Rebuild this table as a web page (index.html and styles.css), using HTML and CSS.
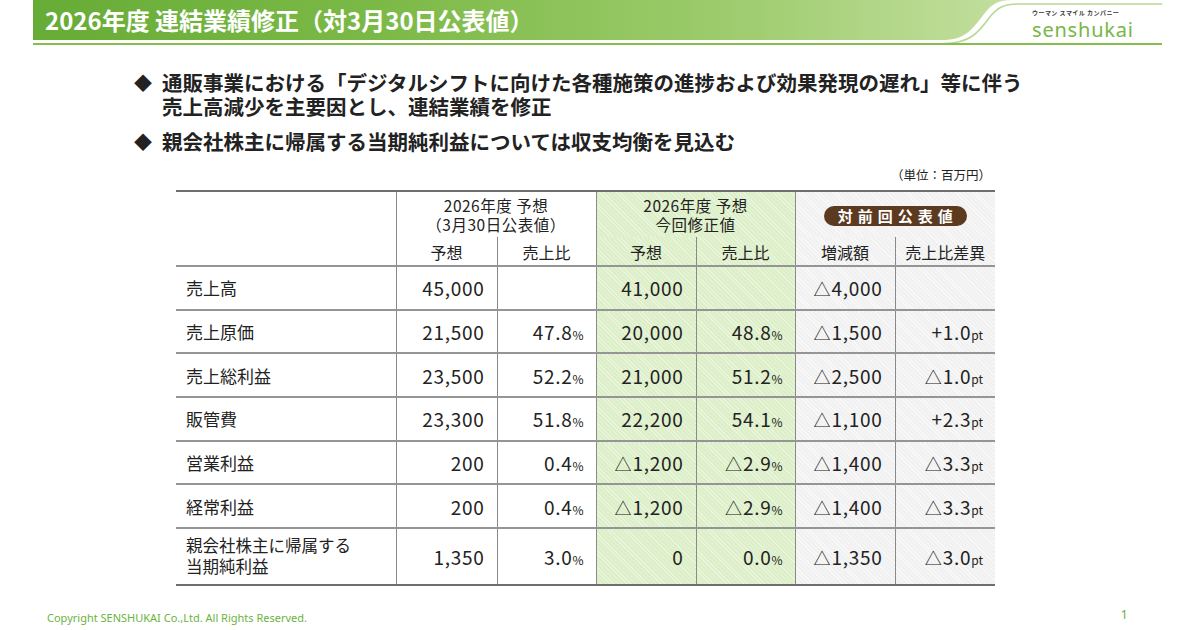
FILE: index.html
```html
<!DOCTYPE html>
<html lang="ja">
<head>
<meta charset="utf-8">
<title>2026年度 連結業績修正</title>
<link rel="stylesheet" href="styles.css">
</head>
<body>
<div class="slide">
  <header class="header">
    <svg class="header-bg" width="1200" height="47" viewBox="0 0 1200 47" aria-hidden="true">
      <defs>
        <linearGradient id="gbar" x1="33" y1="0" x2="1010" y2="0" gradientUnits="userSpaceOnUse">
          <stop offset="0" stop-color="#67ac37"/>
          <stop offset="0.35" stop-color="#7bb946"/>
          <stop offset="0.7" stop-color="#9ccb6b"/>
          <stop offset="1" stop-color="#c3df9f"/>
        </linearGradient>
      </defs>
      <path d="M33,0 H1012 C998,0 992,4 984,14 C972,30 965,40 942,40 H33 Z" fill="url(#gbar)"/>
      <path d="M944,43.5 C970,43.5 979,32 989,18 C997,8 1003,4 1018,4 H1162" fill="none" stroke="#b9d894" stroke-width="1.6"/>
      <path d="M33,44 H1162" fill="none" stroke="#86be4e" stroke-width="2"/>
    </svg>
    <div class="header-row">
      <h1 class="title">2026年度 連結業績修正（対3月30日公表値）</h1>
      <div class="logo">
        <span class="logo-tag">ウーマン スマイル カンパニー</span>
        <span class="logo-name">senshukai</span>
      </div>
    </div>
  </header>

  <ul class="points">
    <li><span class="mark">◆</span><span class="ptext">通販事業における「デジタルシフトに向けた各種施策の進捗および効果発現の遅れ」等に伴う<br>売上高減少を主要因とし、連結業績を修正</span></li>
    <li><span class="mark">◆</span><span class="ptext">親会社株主に帰属する当期純利益については収支均衡を見込む</span></li>
  </ul>

  <div class="tablewrap">
    <p class="unit">（単位：百万円）</p>
    <table class="fin">
      <colgroup>
        <col class="c-label"><col class="c1"><col class="c2"><col class="c3"><col class="c4"><col class="c5"><col class="c6">
      </colgroup>
      <thead>
        <tr class="h1row">
          <th rowspan="2" class="lab"></th>
          <th colspan="2" class="grp"><span class="hl">2026年度 予想</span><span class="hl">（3月30日公表値）</span></th>
          <th colspan="2" class="grp g"><span class="hl">2026年度 予想</span><span class="hl">今回修正値</span></th>
          <th colspan="2" class="grp s"><span class="badge">対前回公表値</span></th>
        </tr>
        <tr class="h2row">
          <th class="sub">予想</th>
          <th class="sub">売上比</th>
          <th class="sub g">予想</th>
          <th class="sub g">売上比</th>
          <th class="sub s">増減額</th>
          <th class="sub s">売上比差異</th>
        </tr>
      </thead>
      <tbody>
        <tr>
          <td class="lab">売上高</td>
          <td class="num">45,000</td>
          <td class="num"></td>
          <td class="num g">41,000</td>
          <td class="num g"></td>
          <td class="num s"><span class="tri">△</span>4,000</td>
          <td class="num s"></td>
        </tr>
        <tr>
          <td class="lab">売上原価</td>
          <td class="num">21,500</td>
          <td class="num">47.8<span class="u">%</span></td>
          <td class="num g">20,000</td>
          <td class="num g">48.8<span class="u">%</span></td>
          <td class="num s"><span class="tri">△</span>1,500</td>
          <td class="num s">+1.0<span class="u">pt</span></td>
        </tr>
        <tr>
          <td class="lab">売上総利益</td>
          <td class="num">23,500</td>
          <td class="num">52.2<span class="u">%</span></td>
          <td class="num g">21,000</td>
          <td class="num g">51.2<span class="u">%</span></td>
          <td class="num s"><span class="tri">△</span>2,500</td>
          <td class="num s"><span class="tri">△</span>1.0<span class="u">pt</span></td>
        </tr>
        <tr>
          <td class="lab">販管費</td>
          <td class="num">23,300</td>
          <td class="num">51.8<span class="u">%</span></td>
          <td class="num g">22,200</td>
          <td class="num g">54.1<span class="u">%</span></td>
          <td class="num s"><span class="tri">△</span>1,100</td>
          <td class="num s">+2.3<span class="u">pt</span></td>
        </tr>
        <tr>
          <td class="lab">営業利益</td>
          <td class="num">200</td>
          <td class="num">0.4<span class="u">%</span></td>
          <td class="num g"><span class="tri">△</span>1,200</td>
          <td class="num g"><span class="tri">△</span>2.9<span class="u">%</span></td>
          <td class="num s"><span class="tri">△</span>1,400</td>
          <td class="num s"><span class="tri">△</span>3.3<span class="u">pt</span></td>
        </tr>
        <tr>
          <td class="lab">経常利益</td>
          <td class="num">200</td>
          <td class="num">0.4<span class="u">%</span></td>
          <td class="num g"><span class="tri">△</span>1,200</td>
          <td class="num g"><span class="tri">△</span>2.9<span class="u">%</span></td>
          <td class="num s"><span class="tri">△</span>1,400</td>
          <td class="num s"><span class="tri">△</span>3.3<span class="u">pt</span></td>
        </tr>
        <tr class="last">
          <td class="lab two"><span class="hl2">親会社株主に帰属する</span><span class="hl2">当期純利益</span></td>
          <td class="num">1,350</td>
          <td class="num">3.0<span class="u">%</span></td>
          <td class="num g">0</td>
          <td class="num g">0.0<span class="u">%</span></td>
          <td class="num s"><span class="tri">△</span>1,350</td>
          <td class="num s"><span class="tri">△</span>3.0<span class="u">pt</span></td>
        </tr>
      </tbody>
    </table>
  </div>

  <footer class="footer">
    <span class="copy">Copyright SENSHUKAI Co.,Ltd. All Rights Reserved.</span>
    <span class="page">1</span>
  </footer>
</div>
</body>
</html>
```

FILE: styles.css
```css
* { box-sizing: border-box; }

html, body {
  margin: 0;
  padding: 0;
  background: #ffffff;
}

body {
  width: 1200px;
  height: 630px;
  overflow: hidden;
  font-family: "Noto Sans CJK JP", "Noto Sans", sans-serif;
  color: #222222;
}

.slide {
  width: 1200px;
  height: 630px;
}

/* ---------- header ---------- */
.header {
  display: grid;
  height: 47px;
}

.header > * {
  grid-area: 1 / 1;
}

.header-bg {
  display: block;
}

.header-row {
  display: flex;
  align-items: flex-start;
}

.title {
  margin: 0;
  padding-left: 45px;
  height: 40px;
  line-height: 40px;
  font-size: 24px;
  font-weight: 700;
  color: #ffffff;
}

.logo {
  margin-left: auto;
  margin-right: 67px;
  padding-top: 8px;
  display: flex;
  flex-direction: column;
  width: 101px;
}

.logo-tag {
  font-size: 6px;
  line-height: 9px;
  height: 9px;
  font-weight: 700;
  color: #3a3a3a;
  letter-spacing: 0.45px;
  white-space: nowrap;
}

.logo-name {
  font-family: "Noto Sans", "Open Sans", sans-serif;
  font-size: 20px;
  line-height: 25px;
  color: #78b646;
  letter-spacing: 0.8px;
}

/* ---------- bullets ---------- */
.points {
  list-style: none;
  margin: 23px 0 0 0;
  padding: 0 0 0 134px;
}

.points li {
  display: flex;
  align-items: flex-start;
  font-size: 20.5px;
  line-height: 24px;
  font-weight: 700;
  color: #222222;
}

.points li + li {
  margin-top: 11px;
}

.mark {
  width: 28px;
  flex: none;
  font-size: 18px;
}

/* ---------- table ---------- */
.tablewrap {
  margin: 14px 0 0 176px;
  width: 819px;
}

.unit {
  margin: 0 0 7px 0;
  text-align: right;
  font-size: 12.5px;
  line-height: 16px;
  padding-right: 4px;
  color: #222222;
}

.fin {
  width: 819px;
  border-collapse: collapse;
  table-layout: fixed;
  border-top: 2px solid #6e6e6e;
  border-bottom: 2px solid #6e6e6e;
}

.c-label { width: 220px; }
.c1 { width: 101px; }
.c2 { width: 99px; }
.c3 { width: 100px; }
.c4 { width: 99px; }
.c5 { width: 100px; }
.c6 { width: 100px; }

.fin th, .fin td {
  padding: 0;
  font-weight: 400;
  border-left: 1.5px solid #8a8a8a;
}

.fin .lab {
  border-left: none;
  text-align: left;
  padding-left: 10px;
  font-size: 17px;
  line-height: 21px;
}

.h1row { height: 46px; }
.h2row { height: 29px; }

.grp {
  font-size: 15.5px;
  text-align: center;
  vertical-align: middle;
  padding-top: 4px;
  letter-spacing: 0.5px;
}

.hl {
  display: block;
  height: 19px;
  line-height: 19px;
}

.h1row .grp {
  border-left: 1.5px solid #8a8a8a;
}

.h2row .sub {
  font-size: 16px;
  line-height: 20px;
  text-align: center;
  vertical-align: middle;
  padding-top: 2px;
}

.fin tbody tr {
  height: 43.7px;
  border-top: 2px solid #959595;
}

.fin tbody tr.last {
  height: 56.5px;
}

.fin .lab.two {
  font-size: 16.5px;
}

.hl2 {
  display: block;
  height: 21px;
  line-height: 21px;
}

.num {
  text-align: right;
  padding-right: 12px !important;
  font-size: 19px;
  letter-spacing: 0.7px;
  vertical-align: middle;
}

.tri {
  font-size: 17px;
  letter-spacing: 0;
  margin-right: 1px;
}

.u {
  font-size: 12px;
  letter-spacing: 0;
}

.g {
  background-color: #dbeec5;
  background-image: repeating-linear-gradient(45deg, rgba(255,255,255,0.45) 0 1px, transparent 1px 3px);
}

.s {
  background-color: #f0f0f0;
  background-image: repeating-linear-gradient(45deg, rgba(255,255,255,0.6) 0 1px, transparent 1px 3px);
}

.badge {
  display: inline-block;
  background: #5c3a1f;
  color: #ffffff;
  font-weight: 700;
  font-size: 15px;
  line-height: 20px;
  height: 20px;
  padding: 0 9px 0 14px;
  letter-spacing: 5px;
  border-radius: 10px;
  vertical-align: middle;
}

/* ---------- footer ---------- */
.footer {
  display: flex;
  justify-content: space-between;
  align-items: flex-end;
  margin-top: 21px;
  padding: 0 72px 0 47px;
  color: #6cb33e;
}

.copy {
  font-family: "Noto Sans", "Open Sans", sans-serif;
  font-size: 11px;
  line-height: 14px;
}

.page {
  font-family: "Noto Sans", "Open Sans", sans-serif;
  font-size: 13px;
  line-height: 14px;
  padding-bottom: 4px;
}
```
